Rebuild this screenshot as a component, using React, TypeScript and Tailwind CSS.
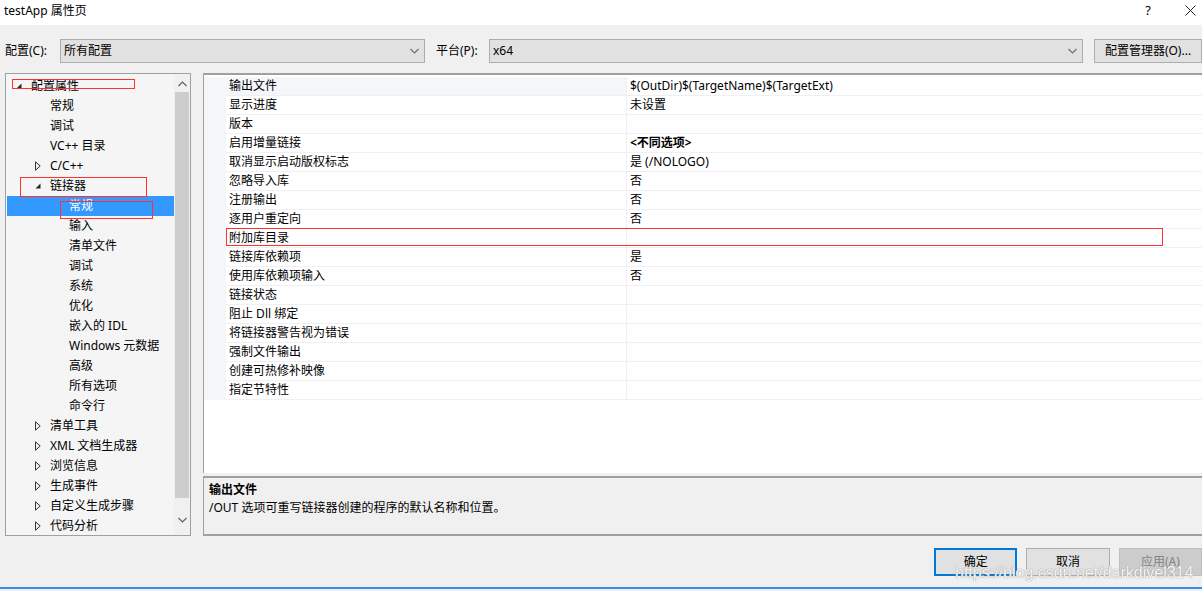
import React from 'react';

const FONT = { fontFamily: '"Noto Sans", "Noto Sans CJK SC", sans-serif' };

type TreeItem = { label: string; level: number; kind?: 'open' | 'closed'; selected?: boolean };

const TREE: TreeItem[] = [
  { label: '配置属性', level: 0, kind: 'open' },
  { label: '常规', level: 1 },
  { label: '调试', level: 1 },
  { label: 'VC++ 目录', level: 1 },
  { label: 'C/C++', level: 1, kind: 'closed' },
  { label: '链接器', level: 1, kind: 'open' },
  { label: '常规', level: 2, selected: true },
  { label: '输入', level: 2 },
  { label: '清单文件', level: 2 },
  { label: '调试', level: 2 },
  { label: '系统', level: 2 },
  { label: '优化', level: 2 },
  { label: '嵌入的 IDL', level: 2 },
  { label: 'Windows 元数据', level: 2 },
  { label: '高级', level: 2 },
  { label: '所有选项', level: 2 },
  { label: '命令行', level: 2 },
  { label: '清单工具', level: 1, kind: 'closed' },
  { label: 'XML 文档生成器', level: 1, kind: 'closed' },
  { label: '浏览信息', level: 1, kind: 'closed' },
  { label: '生成事件', level: 1, kind: 'closed' },
  { label: '自定义生成步骤', level: 1, kind: 'closed' },
  { label: '代码分析', level: 1, kind: 'closed' },
];

const PROPS: { name: string; value?: string; bold?: boolean }[] = [
  { name: '输出文件', value: '$(OutDir)$(TargetName)$(TargetExt)' },
  { name: '显示进度', value: '未设置' },
  { name: '版本' },
  { name: '启用增量链接', value: '<不同选项>', bold: true },
  { name: '取消显示启动版权标志', value: '是 (/NOLOGO)' },
  { name: '忽略导入库', value: '否' },
  { name: '注册输出', value: '否' },
  { name: '逐用户重定向', value: '否' },
  { name: '附加库目录' },
  { name: '链接库依赖项', value: '是' },
  { name: '使用库依赖项输入', value: '否' },
  { name: '链接状态' },
  { name: '阻止 Dll 绑定' },
  { name: '将链接器警告视为错误' },
  { name: '强制文件输出' },
  { name: '创建可热修补映像' },
  { name: '指定节特性' },
];

function Chevron({ up = false, color = '#606060' }: { up?: boolean; color?: string }) {
  return (
    <svg width="9" height="6" viewBox="0 0 9 6">
      <path d={up ? 'M0.5 5 L4.5 1 L8.5 5' : 'M0.5 1 L4.5 5 L8.5 1'} fill="none" stroke={color} strokeWidth="1.2" />
    </svg>
  );
}

function Combo({ value, className }: { value: string; className: string }) {
  return (
    <div className={`h-[24px] bg-[#e1e1e1] border border-[#adadad] flex items-center pl-[3px] pr-[5px] ${className}`}>
      <span className="flex-1">{value}</span>
      <Chevron color="#707070" />
    </div>
  );
}

function Toggle({ kind }: { kind?: 'open' | 'closed' }) {
  if (kind === 'open') {
    return (
      <svg width="6" height="6" viewBox="0 0 6 6">
        <path d="M5.5 0.5 L5.5 5.5 L0.5 5.5 Z" fill="#262626" />
      </svg>
    );
  }
  if (kind === 'closed') {
    return (
      <svg width="6" height="10" viewBox="0 0 6 10">
        <path d="M0.5 0.8 L5.2 5 L0.5 9.2 Z" fill="none" stroke="#333" strokeWidth="1" />
      </svg>
    );
  }
  return null;
}

function Tree() {
  return (
    <div className="relative w-[186px] h-[463px] border border-[#a0a0a0] bg-[#f5f5f5] flex overflow-hidden">
      <div className="flex-1 pt-[2px] pl-[1px] overflow-hidden">
        {TREE.map((t, i) => (
          <div
            key={i}
            className={`h-[20px] flex items-center ${t.selected ? 'bg-[#3399ff] text-white' : 'text-black'}`}
            style={{ paddingLeft: 5 + t.level * 19 }}
          >
            <span className="w-[19px] flex items-center justify-start pl-[4px]">
              <Toggle kind={t.kind} />
            </span>
            <span className="whitespace-nowrap">{t.label}</span>
          </div>
        ))}
      </div>
      <div className="w-[16px] bg-[#f0f0f0] flex flex-col items-center">
        <div className="h-[18px] flex items-center justify-center pt-[2px]">
          <Chevron up color="#606060" />
        </div>
        <div className="w-[14px] h-[406px] bg-[#cdcdcd]" />
        <div className="flex-1 flex items-center justify-center pt-[6px]">
          <Chevron color="#606060" />
        </div>
      </div>
      <div className="absolute left-[6px] top-[5px] w-[123px] h-[10px] border border-[#ff3030]" />
      <div className="absolute left-[14px] top-[103px] w-[127px] h-[20px] border border-[#ff3030]" />
      <div className="absolute left-[54px] top-[127px] w-[93px] h-[18px] border border-[#ff3030]" />
    </div>
  );
}

function Grid() {
  return (
    <div className="relative h-[400px] bg-white border-t-2 border-l border-[#a0a0a0]">
      <div className="pt-[2px]">
        {PROPS.map((p, i) => (
          <div key={i} className="h-[19px] flex">
            <div className="w-[22px] bg-[#f4f6fa]" />
            <div
              className={`w-[400px] pl-[3px] flex items-center border-b border-[#f0f0f4] ${i === 0 ? 'bg-[#f4f6fa]' : ''}`}
            >
              {p.name}
            </div>
            <div className={`flex-1 pl-[3px] flex items-center border-b border-l border-[#f0f0f4] ${p.bold ? 'font-bold' : ''}`}>
              {p.value}
            </div>
          </div>
        ))}
      </div>
      <div className="absolute left-[22px] top-[153px] w-[937px] h-[18px] border border-[#ff3030]" />
    </div>
  );
}

export default function App() {
  return (
    <div className="relative w-[1202px] h-[591px] bg-[#f0f0f0] text-[12px] text-black overflow-hidden flex flex-col" style={FONT}>
      {/* title bar */}
      <div className="h-[25px] bg-white flex items-center pl-[4px] pr-[6px]">
        <span className="flex-1 pb-[4px]">testApp 属性页</span>
        <span className="text-[13px] mr-[34px] pb-[4px]">?</span>
        <svg width="11" height="11" viewBox="0 0 11 11" className="mb-[4px]">
          <path d="M0.5 0.5 L10.5 10.5 M10.5 0.5 L0.5 10.5" stroke="#222" strokeWidth="1" />
        </svg>
      </div>

      {/* configuration row */}
      <div className="h-[48px] pt-[14px] flex items-start">
        <span className="w-[60px] pl-[5px] h-[24px] flex items-center">配置(C):</span>
        <Combo value="所有配置" className="w-[365px]" />
        <span className="w-[64px] pl-[11px] h-[24px] flex items-center">平台(P):</span>
        <Combo value="x64" className="w-[594px]" />
        <div className="ml-[11px] w-[108px] h-[24px] bg-[#e1e1e1] border border-[#adadad] flex items-center justify-center">
          配置管理器(O)...
        </div>
      </div>

      {/* main */}
      <div className="h-[463px] flex pl-[5px]">
        <Tree />
        <div className="flex-1 ml-[12px] flex flex-col">
          <Grid />
          <div className="mt-[3px] h-[60px] border-t-2 border-b-2 border-l border-[#a0a0a0] bg-[#f0f0f0] pl-[5px] pt-[3px] leading-[18px]">
            <div className="font-bold">输出文件</div>
            <div>/OUT 选项可重写链接器创建的程序的默认名称和位置。</div>
          </div>
        </div>
      </div>

      {/* buttons */}
      <div className="h-[51px] flex items-start pt-[12px] pl-[934px] gap-[9px]">
        <div className="w-[86px] h-[28px] bg-[#e1e1e1] border-2 border-[#0078d7] flex items-center justify-center">确定</div>
        <div className="w-[86px] h-[28px] bg-[#e1e1e1] border border-[#adadad] flex items-center justify-center">取消</div>
        <div className="w-[86px] h-[28px] bg-[#cccccc] border border-[#bfbfbf] text-[#838383] flex items-center justify-center">应用(A)</div>
      </div>
      <div className="h-[4px] border-t-2 border-[#3c8fdc] bg-[#eaf2fb]" />

      {/* watermark */}
      <div
        className="absolute left-[955px] top-[561px] text-[16px] text-white/90 whitespace-nowrap"
        style={{ fontFamily: '"Liberation Sans", sans-serif', textShadow: '0 0 1px #9a9a9a, 0 0 1px #9a9a9a' }}
      >
        https://blog.csdn.net/darkdivel314
      </div>
    </div>
  );
}
